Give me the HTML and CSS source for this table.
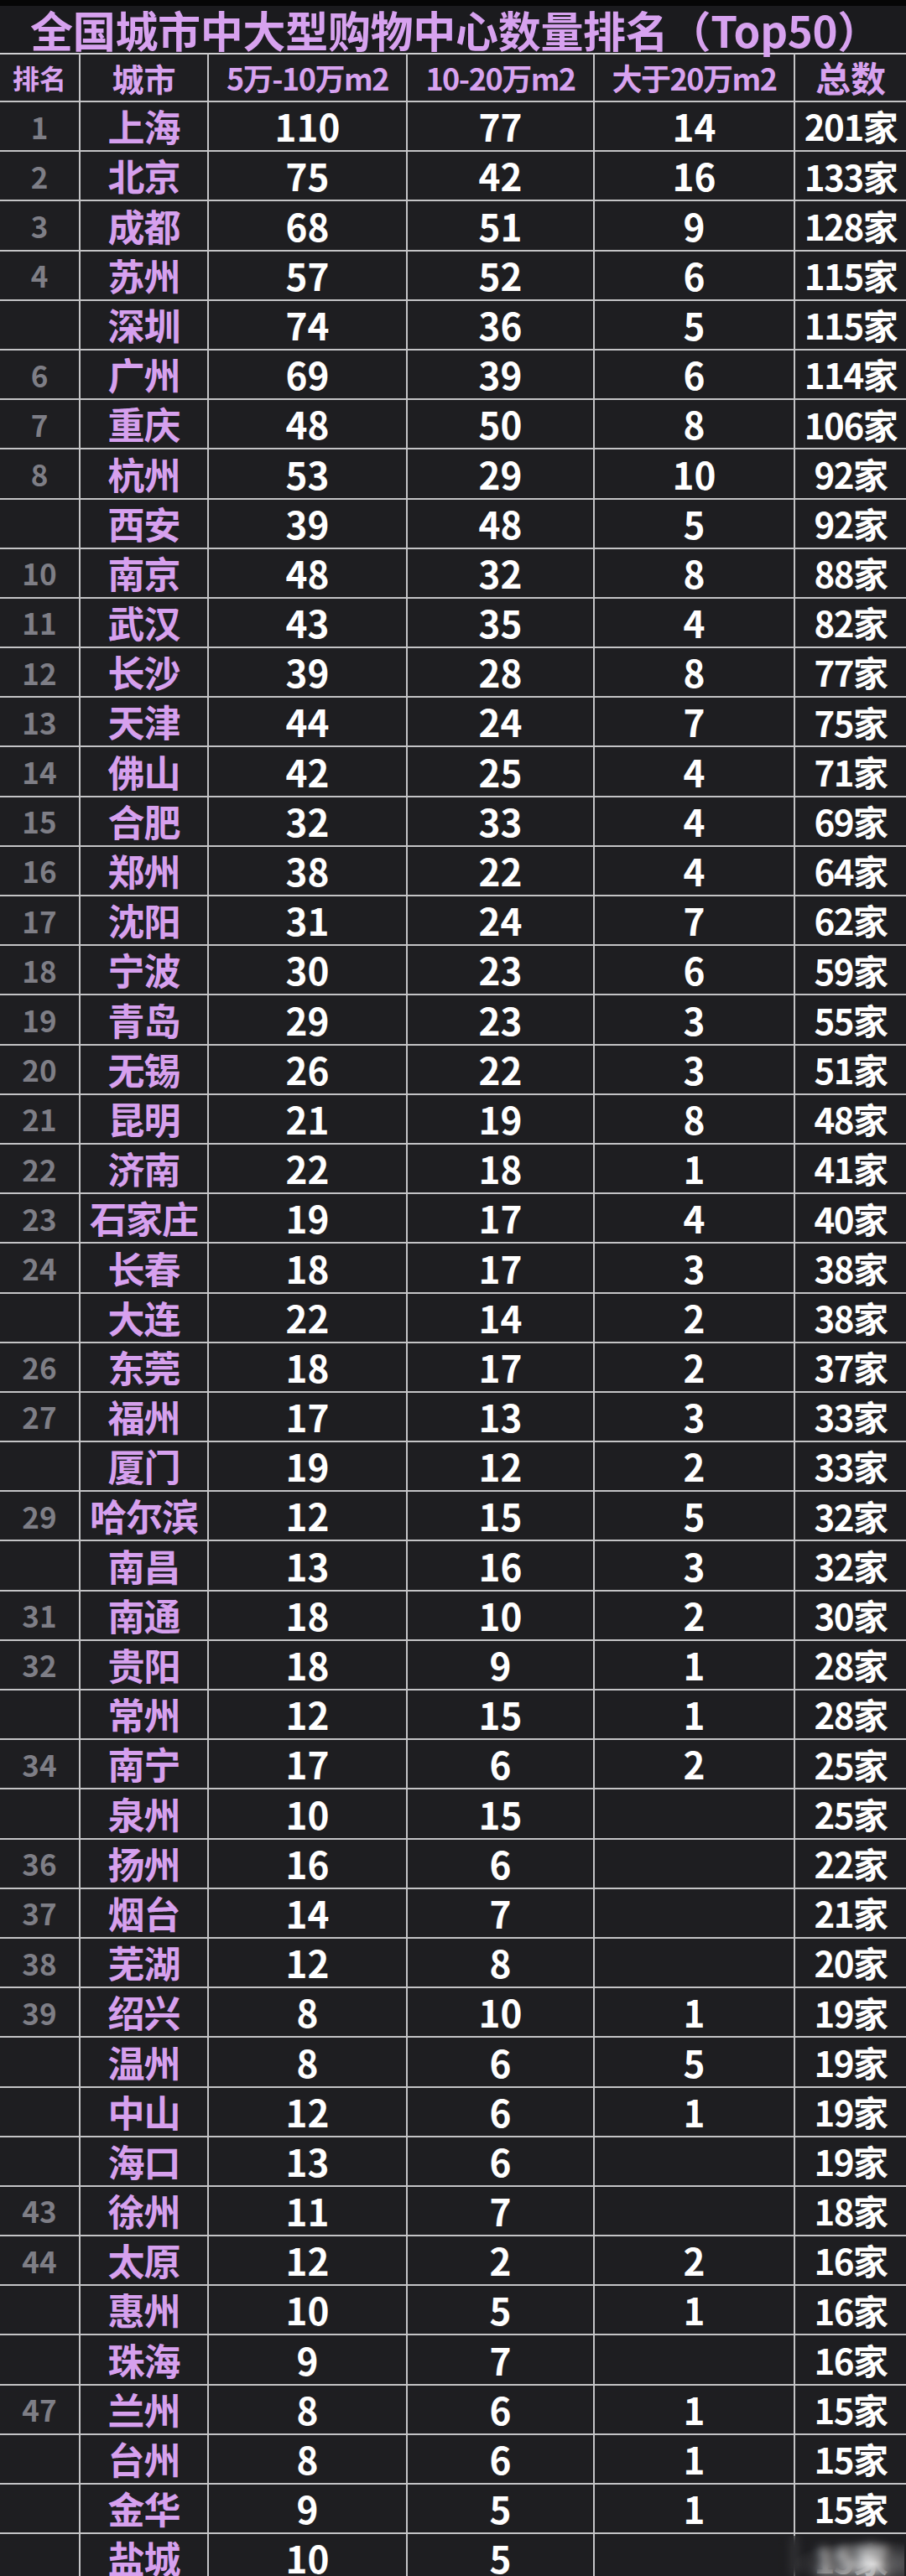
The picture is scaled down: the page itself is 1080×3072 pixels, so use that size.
FILE: index.html
```html
<!DOCTYPE html>
<html lang="zh-CN">
<head>
<meta charset="utf-8">
<title>全国城市中大型购物中心数量排名（Top50）</title>
<link rel="stylesheet" href="styles.css">
</head>
<body>
<div class="page">
  <h1 class="title">全国城市中大型购物中心数量排名（Top50）</h1>
  <table class="rank-table">
    <colgroup>
      <col class="c-rank"><col class="c-city"><col class="c-a"><col class="c-b"><col class="c-c"><col class="c-total">
    </colgroup>
    <thead>
      <tr>
        <th class="h-rank">排名</th>
        <th class="h-city">城市</th>
        <th class="h-range">5万-10万m2</th>
        <th class="h-range">10-20万m2</th>
        <th class="h-range">大于20万m2</th>
        <th class="h-total">总数</th>
      </tr>
    </thead>
    <tbody>
      <tr><td class="rank">1</td><td class="city">上海</td><td class="num">110</td><td class="num">77</td><td class="num">14</td><td class="total">201家</td></tr>
      <tr><td class="rank">2</td><td class="city">北京</td><td class="num">75</td><td class="num">42</td><td class="num">16</td><td class="total">133家</td></tr>
      <tr><td class="rank">3</td><td class="city">成都</td><td class="num">68</td><td class="num">51</td><td class="num">9</td><td class="total">128家</td></tr>
      <tr><td class="rank">4</td><td class="city">苏州</td><td class="num">57</td><td class="num">52</td><td class="num">6</td><td class="total">115家</td></tr>
      <tr><td class="rank"></td><td class="city">深圳</td><td class="num">74</td><td class="num">36</td><td class="num">5</td><td class="total">115家</td></tr>
      <tr><td class="rank">6</td><td class="city">广州</td><td class="num">69</td><td class="num">39</td><td class="num">6</td><td class="total">114家</td></tr>
      <tr><td class="rank">7</td><td class="city">重庆</td><td class="num">48</td><td class="num">50</td><td class="num">8</td><td class="total">106家</td></tr>
      <tr><td class="rank">8</td><td class="city">杭州</td><td class="num">53</td><td class="num">29</td><td class="num">10</td><td class="total">92家</td></tr>
      <tr><td class="rank"></td><td class="city">西安</td><td class="num">39</td><td class="num">48</td><td class="num">5</td><td class="total">92家</td></tr>
      <tr><td class="rank">10</td><td class="city">南京</td><td class="num">48</td><td class="num">32</td><td class="num">8</td><td class="total">88家</td></tr>
      <tr><td class="rank">11</td><td class="city">武汉</td><td class="num">43</td><td class="num">35</td><td class="num">4</td><td class="total">82家</td></tr>
      <tr><td class="rank">12</td><td class="city">长沙</td><td class="num">39</td><td class="num">28</td><td class="num">8</td><td class="total">77家</td></tr>
      <tr><td class="rank">13</td><td class="city">天津</td><td class="num">44</td><td class="num">24</td><td class="num">7</td><td class="total">75家</td></tr>
      <tr><td class="rank">14</td><td class="city">佛山</td><td class="num">42</td><td class="num">25</td><td class="num">4</td><td class="total">71家</td></tr>
      <tr><td class="rank">15</td><td class="city">合肥</td><td class="num">32</td><td class="num">33</td><td class="num">4</td><td class="total">69家</td></tr>
      <tr><td class="rank">16</td><td class="city">郑州</td><td class="num">38</td><td class="num">22</td><td class="num">4</td><td class="total">64家</td></tr>
      <tr><td class="rank">17</td><td class="city">沈阳</td><td class="num">31</td><td class="num">24</td><td class="num">7</td><td class="total">62家</td></tr>
      <tr><td class="rank">18</td><td class="city">宁波</td><td class="num">30</td><td class="num">23</td><td class="num">6</td><td class="total">59家</td></tr>
      <tr><td class="rank">19</td><td class="city">青岛</td><td class="num">29</td><td class="num">23</td><td class="num">3</td><td class="total">55家</td></tr>
      <tr><td class="rank">20</td><td class="city">无锡</td><td class="num">26</td><td class="num">22</td><td class="num">3</td><td class="total">51家</td></tr>
      <tr><td class="rank">21</td><td class="city">昆明</td><td class="num">21</td><td class="num">19</td><td class="num">8</td><td class="total">48家</td></tr>
      <tr><td class="rank">22</td><td class="city">济南</td><td class="num">22</td><td class="num">18</td><td class="num">1</td><td class="total">41家</td></tr>
      <tr><td class="rank">23</td><td class="city">石家庄</td><td class="num">19</td><td class="num">17</td><td class="num">4</td><td class="total">40家</td></tr>
      <tr><td class="rank">24</td><td class="city">长春</td><td class="num">18</td><td class="num">17</td><td class="num">3</td><td class="total">38家</td></tr>
      <tr><td class="rank"></td><td class="city">大连</td><td class="num">22</td><td class="num">14</td><td class="num">2</td><td class="total">38家</td></tr>
      <tr><td class="rank">26</td><td class="city">东莞</td><td class="num">18</td><td class="num">17</td><td class="num">2</td><td class="total">37家</td></tr>
      <tr><td class="rank">27</td><td class="city">福州</td><td class="num">17</td><td class="num">13</td><td class="num">3</td><td class="total">33家</td></tr>
      <tr><td class="rank"></td><td class="city">厦门</td><td class="num">19</td><td class="num">12</td><td class="num">2</td><td class="total">33家</td></tr>
      <tr><td class="rank">29</td><td class="city">哈尔滨</td><td class="num">12</td><td class="num">15</td><td class="num">5</td><td class="total">32家</td></tr>
      <tr><td class="rank"></td><td class="city">南昌</td><td class="num">13</td><td class="num">16</td><td class="num">3</td><td class="total">32家</td></tr>
      <tr><td class="rank">31</td><td class="city">南通</td><td class="num">18</td><td class="num">10</td><td class="num">2</td><td class="total">30家</td></tr>
      <tr><td class="rank">32</td><td class="city">贵阳</td><td class="num">18</td><td class="num">9</td><td class="num">1</td><td class="total">28家</td></tr>
      <tr><td class="rank"></td><td class="city">常州</td><td class="num">12</td><td class="num">15</td><td class="num">1</td><td class="total">28家</td></tr>
      <tr><td class="rank">34</td><td class="city">南宁</td><td class="num">17</td><td class="num">6</td><td class="num">2</td><td class="total">25家</td></tr>
      <tr><td class="rank"></td><td class="city">泉州</td><td class="num">10</td><td class="num">15</td><td class="num"></td><td class="total">25家</td></tr>
      <tr><td class="rank">36</td><td class="city">扬州</td><td class="num">16</td><td class="num">6</td><td class="num"></td><td class="total">22家</td></tr>
      <tr><td class="rank">37</td><td class="city">烟台</td><td class="num">14</td><td class="num">7</td><td class="num"></td><td class="total">21家</td></tr>
      <tr><td class="rank">38</td><td class="city">芜湖</td><td class="num">12</td><td class="num">8</td><td class="num"></td><td class="total">20家</td></tr>
      <tr><td class="rank">39</td><td class="city">绍兴</td><td class="num">8</td><td class="num">10</td><td class="num">1</td><td class="total">19家</td></tr>
      <tr><td class="rank"></td><td class="city">温州</td><td class="num">8</td><td class="num">6</td><td class="num">5</td><td class="total">19家</td></tr>
      <tr><td class="rank"></td><td class="city">中山</td><td class="num">12</td><td class="num">6</td><td class="num">1</td><td class="total">19家</td></tr>
      <tr><td class="rank"></td><td class="city">海口</td><td class="num">13</td><td class="num">6</td><td class="num"></td><td class="total">19家</td></tr>
      <tr><td class="rank">43</td><td class="city">徐州</td><td class="num">11</td><td class="num">7</td><td class="num"></td><td class="total">18家</td></tr>
      <tr><td class="rank">44</td><td class="city">太原</td><td class="num">12</td><td class="num">2</td><td class="num">2</td><td class="total">16家</td></tr>
      <tr><td class="rank"></td><td class="city">惠州</td><td class="num">10</td><td class="num">5</td><td class="num">1</td><td class="total">16家</td></tr>
      <tr><td class="rank"></td><td class="city">珠海</td><td class="num">9</td><td class="num">7</td><td class="num"></td><td class="total">16家</td></tr>
      <tr><td class="rank">47</td><td class="city">兰州</td><td class="num">8</td><td class="num">6</td><td class="num">1</td><td class="total">15家</td></tr>
      <tr><td class="rank"></td><td class="city">台州</td><td class="num">8</td><td class="num">6</td><td class="num">1</td><td class="total">15家</td></tr>
      <tr><td class="rank"></td><td class="city">金华</td><td class="num">9</td><td class="num">5</td><td class="num">1</td><td class="total">15家</td></tr>
      <tr><td class="rank"></td><td class="city">盐城</td><td class="num">10</td><td class="num">5</td><td class="num"></td><td class="total total-marked">15家<span class="watermark"></span></td></tr>
    </tbody>
  </table>
</div>
</body>
</html>
```

FILE: styles.css
```css
html, body {
  margin: 0;
  padding: 0;
  background: #1c1c1f;
}
.page {
  width: 1080px;
  font-family: "Noto Sans CJK SC", "Noto Sans", sans-serif;
  font-weight: 700;
}
.title {
  margin: 0;
  height: 56px;
  border-top: 7px solid #060606;
  background: #1b1b1e;
  color: #d7a2ef;
  font-size: 51px;
  line-height: 56px;
  font-weight: 700;
  padding-left: 36px;
  white-space: nowrap;
  letter-spacing: -0.3px;
}
.rank-table {
  width: 1080px;
  table-layout: fixed;
  border-collapse: collapse;
  background: #1e1e21;
}
.c-rank { width: 95px; }
.c-city { width: 153px; }
.c-a { width: 237px; }
.c-b { width: 223px; }
.c-c { width: 239px; }
.c-total { width: 133px; }
.rank-table th,
.rank-table td {
  border: 2px solid #c4c4c6;
  padding: 0;
  text-align: center;
  white-space: nowrap;
}
.rank-table tr:first-child td { border-top-color: #d8d8da; }
.rank-table td:first-child,
.rank-table th:first-child { border-left: none; }
.rank-table td:last-child,
.rank-table th:last-child { border-right: none; }
.rank-table th {
  height: 55px;
  color: #d7a2ef;
  font-weight: 700;
  line-height: 1.2;
  border-top-color: #d0d0d2;
}
.h-rank { font-size: 32px; }
.h-city { font-size: 38px; }
.h-range { font-size: 36px; letter-spacing: -1.5px; }
.h-total { font-size: 42px; }
.rank-table td {
  height: 57.2px;
  line-height: 1.2;
}
.rank {
  color: #7e7e86;
  font-size: 35px;
}
.city {
  color: #d6a0ee;
  font-size: 44px;
  letter-spacing: -1px;
}
.num {
  color: #ffffff;
  font-size: 44px;
}
.total {
  color: #ffffff;
  font-size: 42px;
  letter-spacing: -1.5px;
}
.total-marked {
  position: relative;
}
.watermark {
  position: absolute;
  left: -20px;
  top: 2px;
  width: 150px;
  height: 56px;
  backdrop-filter: blur(6px);
  background: radial-gradient(ellipse at 75% 60%, rgba(255,255,255,0.35), rgba(30,30,33,0.4) 60%);
}
```
